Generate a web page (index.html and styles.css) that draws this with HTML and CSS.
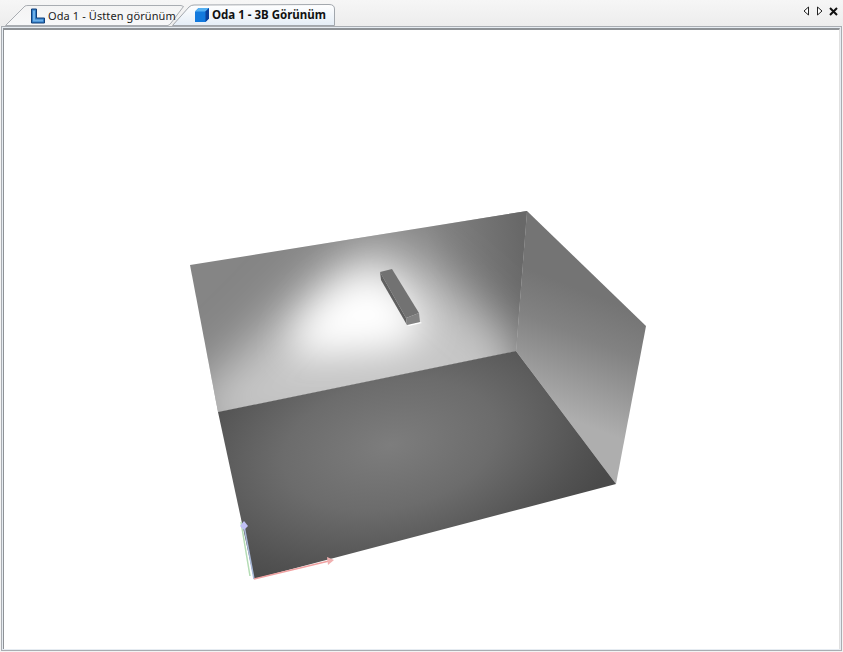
FILE: index.html
```html
<!DOCTYPE html>
<html lang="tr">
<head>
<meta charset="utf-8">
<title>Oda 1 - 3B Görünüm</title>
<link rel="stylesheet" href="styles.css">
</head>
<body>
<div class="window">
  <div class="strip">
    <div class="tabs">
      <div class="tab tab-back">
        <svg class="tab-shape" width="180" height="22" viewBox="0 0 180 22"><defs><linearGradient id="tb" x1="0" y1="0" x2="0" y2="1"><stop offset="0" stop-color="#f4f4f4"/><stop offset="1" stop-color="#f7f8f9"/></linearGradient></defs><path d="M0.5 21.5 L20 2 Q21 1.500 23 1.500 L176 1.500 L178.500 2.500 L166 19 Q165 20.500 163 21.500 Z" fill="url(#tb)" stroke="#a9adb2"/></svg>
        <svg class="tab-icon" width="16" height="16" viewBox="0 0 16 16"><path d="M1.500 1 H6.500 V10 H14.500 V15 H1.500 Z" fill="#2f7cc6" stroke="#123f78"/><path d="M3 2.500 H5 V11.500 H13 V13.500 H3 Z" fill="#6fb0e8"/></svg>
        <span class="tab-label">Oda 1 - Üstten görünüm</span>
      </div>
      <div class="tab tab-front">
        <svg class="tab-shape" width="163" height="23" viewBox="0 0 163 23"><defs><linearGradient id="tf" x1="0" y1="0" x2="0" y2="1"><stop offset="0" stop-color="#ffffff"/><stop offset="1" stop-color="#e4edf6"/></linearGradient></defs><path d="M0.500 22.500 L17 4 Q19 2 22 2 L157 1.500 Q162.500 1.500 162.500 6 L162.500 22.500 Z" fill="url(#tf)" stroke="#a2a7ad"/></svg>
        <svg class="tab-icon" width="16" height="16" viewBox="0 0 16 16"><path d="M1 4.500 L4.500 1 H15 V11.500 L11.500 15 H1 Z" fill="#1279dd"/><path d="M1 4.500 L4.500 1 H15 L11.500 4.500 Z" fill="#54b0f2"/><path d="M11.500 4.500 L15 1 V11.500 L11.500 15 Z" fill="#0a3f9a"/></svg>
        <span class="tab-label tab-label-active">Oda 1 - 3B Görünüm</span>
      </div>
    </div>
    <div class="controls">
      <svg width="7" height="10" viewBox="0 0 7 10"><path d="M5.500 1 L1 5 L5.500 9 Z" fill="#fff" stroke="#222"/></svg>
      <svg width="7" height="10" viewBox="0 0 7 10"><path d="M1.500 1 L6 5 L1.500 9 Z" fill="#fff" stroke="#222"/></svg>
      <svg width="9" height="9" viewBox="0 0 9 9"><path d="M1 1 L8 8 M8 1 L1 8" stroke="#111" stroke-width="2"/></svg>
    </div>
  </div>
  <div class="panel">
    <div class="viewport">
      <svg class="scene" width="835" height="619" viewBox="4 30 835 619">
        <defs>
          <clipPath id="backWall"><polygon points="190,265 527,211 516,351 218,412"/></clipPath>
          <filter id="blurWide" x="-30%" y="-30%" width="160%" height="160%"><feGaussianBlur stdDeviation="24"/></filter>
          <filter id="blurCore" x="-40%" y="-40%" width="180%" height="180%"><feGaussianBlur stdDeviation="18"/></filter>
          <linearGradient id="wallRightShade" gradientUnits="userSpaceOnUse" x1="430" y1="270" x2="525" y2="260">
            <stop offset="0" stop-color="#686868" stop-opacity="0"/><stop offset="1" stop-color="#686868"/>
          </linearGradient>
          <linearGradient id="side" gradientUnits="userSpaceOnUse" x1="594" y1="295" x2="548" y2="410">
            <stop offset="0" stop-color="#747474"/><stop offset=".35" stop-color="#828282"/><stop offset="1" stop-color="#aeaeae"/>
          </linearGradient>
          <radialGradient id="ground" gradientUnits="userSpaceOnUse" cx="0" cy="0" r="1" gradientTransform="translate(390 445) rotate(-12) scale(240 140)">
            <stop offset="0" stop-color="#7d7d7d"/><stop offset=".45" stop-color="#6c6c6c"/><stop offset=".85" stop-color="#525252"/><stop offset="1" stop-color="#4a4a4a"/>
          </radialGradient>
        </defs>
        <polygon points="190,265 527,211 516,351 218,412" fill="#858585"/>
        <polygon points="190,265 527,211 516,351 218,412" fill="url(#wallRightShade)"/>
        <g clip-path="url(#backWall)">
          <path d="M375 238 C420 250 470 305 520 345 L520 430 L200 440 L195 390 C260 345 320 255 375 238 Z" fill="#c6c6c6" filter="url(#blurWide)"/>
          <path d="M370 272 C395 275 420 310 425 335 L390 350 L295 356 C285 335 325 280 370 272 Z" fill="#ffffff" filter="url(#blurCore)"/>
        </g>
        <polygon points="527,211 646,326 616,484 516,351" fill="url(#side)"/>
        <polygon points="218,412 516,351 616,484 254,579" fill="url(#ground)"/>
        <polygon points="407,325 420,322 422,323 409,326" fill="#ffffff"/>
        <polygon points="380,272 392,269 419,313 406,318" fill="#727272"/>
        <polygon points="380,272 406,318 407,325 381,280" fill="#5f5f5f"/>
        <polygon points="406,318 419,313 420,322 407,325" fill="#828282"/>
        <path d="M250 576 L241 522" stroke="#b4dcb4" stroke-width="1.500" fill="none"/>
        <path d="M254 579 L244 526" stroke="#a8b8d8" stroke-width="1.500" fill="none"/>
        <polygon points="244,521 248,526 244,530 240,526" fill="#c0c0f4"/>
        <path d="M254 579 L329 561" stroke="#f0a0a0" stroke-width="1.300" fill="none"/>
        <polygon points="327,557 334,560 328,565" fill="#f0b0b0"/>
      </svg>
    </div>
  </div>
</div>
</body>
</html>
```

FILE: styles.css
```css
html, body {
  margin: 0;
  height: 100%;
  background: #f3f3f3;
  overflow: hidden;
}
.window {
  display: flex;
  flex-direction: column;
  height: 652px;
  width: 843px;
}
.strip {
  display: flex;
  justify-content: space-between;
  height: 26px;
  flex: none;
  background: linear-gradient(#f6f6f6, #ededed);
}
.tabs {
  display: flex;
  align-items: flex-end;
  padding-left: 5px;
  height: 26px;
}
.tab {
  position: relative;
  display: flex;
  align-items: center;
  box-sizing: border-box;
}
.tab-back {
  width: 180px;
  height: 22px;
  padding-left: 25px;
  padding-top: 1px;
}
.tab-front {
  width: 163px;
  height: 23px;
  margin-left: -13px;
  padding-left: 22px;
}
.tab-shape {
  position: absolute;
  left: 0;
  top: 0;
}
.tab-icon {
  position: relative;
  flex: none;
}
.tab-label {
  position: relative;
  font: 11px/16px "Noto Sans", sans-serif;
  letter-spacing: 0.1px;
  color: #222;
  margin-left: 2px;
  white-space: nowrap;
}
.tab-label-active {
  font-size: 11.5px;
  letter-spacing: 0;
  font-weight: 700;
  color: #111;
}
.controls {
  display: flex;
  align-items: center;
  gap: 6px;
  height: 10px;
  margin-top: 6px;
  padding-right: 5px;
}
.panel {
  flex: 1;
  min-height: 0;
  box-sizing: border-box;
  margin: 0 1px 1px 1px;
  padding: 1px;
  border: 1px solid #a9adb2;
  background: #e6ecf2;
}
.viewport {
  box-sizing: border-box;
  height: 100%;
  border-top: 2px solid #8e9296;
  border-left: 1px solid #8e9296;
  border-right: 1px solid #e0e0e0;
  background: #fff;
  overflow: hidden;
}
.scene {
  display: block;
}
```
